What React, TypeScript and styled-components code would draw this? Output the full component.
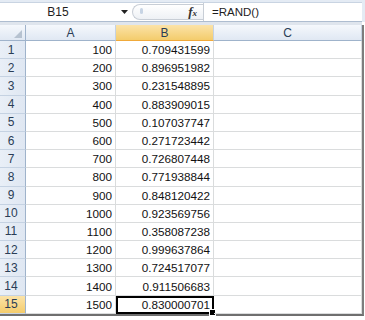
import React from 'react';
import styled, { createGlobalStyle, css } from 'styled-components';

const GlobalStyle = createGlobalStyle`
  html, body {
    margin: 0;
    padding: 0;
    background: #ffffff;
  }
  body {
    font-family: 'Liberation Sans', Arial, sans-serif;
  }
`;

const Frame = styled.div`
  width: 365px;
  height: 320px;
  overflow: hidden;
  background: #ffffff;
  display: flex;
  flex-direction: column;
`;

const TopStrip = styled.div`
  background: #e4ebf4;
`;

const FormulaBar = styled.div`
  display: flex;
  height: 20px;
  margin-top: 2px;
  border-top: 1px solid #c9d4e2;
  border-bottom: 1px solid #aebdd0;
  background: #ffffff;
  width: 362px;
  box-sizing: border-box;
`;

const NameBox = styled.div`
  width: 116px;
  display: flex;
  align-items: center;
  justify-content: center;
  font-size: 12px;
  color: #1e1e1e;
`;

const DropArrow = styled.div`
  width: 16px;
  display: flex;
  align-items: center;
  padding-left: 5px;
  box-sizing: border-box;
`;

const Pill = styled.div`
  width: 71px;
  display: flex;
  align-items: center;
  justify-content: flex-end;
  border: 1px solid #c8ced6;
  border-right: none;
  border-radius: 9px 0 0 9px;
  background: linear-gradient(#ffffff, #eef1f5);
  margin: 1px 0;
  padding-right: 6px;
  box-sizing: border-box;
  position: relative;
`;

const Grip = styled.span`
  position: absolute;
  left: 7px;
  top: 3px;
  width: 3px;
  height: 6px;
  border-radius: 2px;
  background: #c7d4e4;
`;

const Fx = styled.span`
  font-family: 'Liberation Serif', 'Times New Roman', serif;
  font-style: italic;
  font-weight: bold;
  font-size: 13px;
  color: #333;
  sub {
    font-size: 9px;
    vertical-align: baseline;
  }
`;

const FormulaInput = styled.div`
  flex: 1;
  display: flex;
  align-items: center;
  padding-left: 8px;
  border-left: 1px solid #c8ced6;
  font-size: 11.5px;
  color: #1e1e1e;
`;

const Gap = styled.div`
  height: 3px;
  background: #dfe5ed;
  width: 362px;
`;

const Grid = styled.div`
  display: grid;
  grid-template-columns: 26px 90px 98px 148px;
  grid-template-rows: 16px repeat(15, 18.2px);
  width: 362px;
  border-right: 2px solid #7d7d7d;
  border-bottom: 2px solid #6f6f6f;
`;

const headerBase = css`
  display: flex;
  align-items: center;
  justify-content: center;
  font-size: 12px;
  color: #2a3d56;
  box-sizing: border-box;
`;

const ColHeader = styled.div<{ $active?: boolean }>`
  ${headerBase}
  border-right: 1px solid #c5d2e2;
  border-bottom: 1px solid ${({ $active }) => ($active ? '#f0a93a' : '#9fb3cb')};
  background: ${({ $active }) =>
    $active
      ? 'linear-gradient(#fbe3a8, #f4cc6c)'
      : 'linear-gradient(#f5f8fc, #e0e8f3)'};
`;

const Corner = styled.div`
  ${headerBase}
  justify-content: flex-end;
  align-items: flex-end;
  padding: 0 3px 2px 0;
  border-right: 1px solid #9fb3cb;
  border-bottom: 1px solid #9fb3cb;
  background: linear-gradient(#f5f8fc, #e0e8f3);
`;

const RowHeader = styled.div<{ $active?: boolean }>`
  ${headerBase}
  border-right: 1px solid #9fb3cb;
  border-bottom: 1px solid #c5d2e2;
  padding-right: 3px;
  background: ${({ $active }) =>
    $active
      ? 'linear-gradient(#fbe3a8, #f4cc6c)'
      : 'linear-gradient(90deg, #e9eff7, #dfe7f2)'};
`;

const Cell = styled.div<{ $selected?: boolean }>`
  display: flex;
  align-items: center;
  justify-content: flex-end;
  padding-right: 3px;
  font-size: 11.7px;
  color: #111;
  box-sizing: border-box;
  border-right: 1px solid #dadcdd;
  border-bottom: 1px solid #dadcdd;
  position: relative;
  ${({ $selected }) =>
    $selected &&
    css`
      border: 2px solid #000;
      padding-right: 2px;
    `}
`;

const FillHandle = styled.span`
  position: absolute;
  right: -4px;
  bottom: -4px;
  width: 5px;
  height: 5px;
  background: #000;
  border: 1px solid #fff;
`;

const data: [number, string][] = [
  [100, '0.709431599'],
  [200, '0.896951982'],
  [300, '0.231548895'],
  [400, '0.883909015'],
  [500, '0.107037747'],
  [600, '0.271723442'],
  [700, '0.726807448'],
  [800, '0.771938844'],
  [900, '0.848120422'],
  [1000, '0.923569756'],
  [1100, '0.358087238'],
  [1200, '0.999637864'],
  [1300, '0.724517077'],
  [1400, '0.911506683'],
  [1500, '0.830000701'],
];

const App: React.FC = () => {
  return (
    <Frame>
      <GlobalStyle />
      <TopStrip>
        <FormulaBar>
          <NameBox>B15</NameBox>
          <DropArrow>
            <svg width="7" height="4" viewBox="0 0 7 4">
              <path d="M0 0 L7 0 L3.5 4 Z" fill="#222" />
            </svg>
          </DropArrow>
          <Pill>
            <Grip />
            <Fx>
              f<sub>x</sub>
            </Fx>
          </Pill>
          <FormulaInput>=RAND()</FormulaInput>
        </FormulaBar>
      </TopStrip>
      <Gap />
      <Grid>
        <Corner>
          <svg width="8" height="8" viewBox="0 0 8 8">
            <path d="M8 0 L8 8 L0 8 Z" fill="#b6c2d0" />
          </svg>
        </Corner>
        <ColHeader>A</ColHeader>
        <ColHeader $active>B</ColHeader>
        <ColHeader>C</ColHeader>
        {data.map(([a, b], i) => {
          const last = i === data.length - 1;
          return (
            <React.Fragment key={i}>
              <RowHeader $active={last}>{i + 1}</RowHeader>
              <Cell>{a}</Cell>
              <Cell $selected={last}>
                {b}
                {last && <FillHandle />}
              </Cell>
              <Cell />
            </React.Fragment>
          );
        })}
      </Grid>
    </Frame>
  );
};

export default App;
